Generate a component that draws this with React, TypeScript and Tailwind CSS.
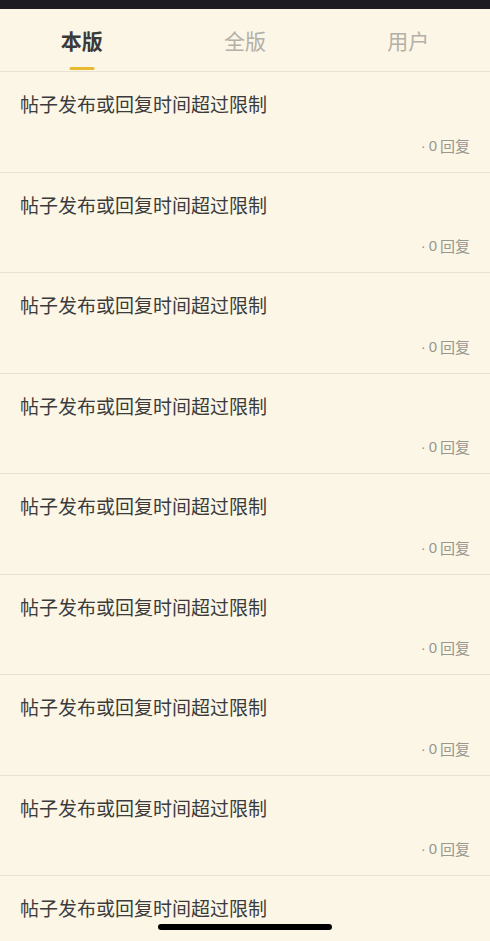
import React, { useState } from 'react';

const tabs = ['本版', '全版', '用户'];

const posts = Array.from({ length: 9 }, (_, i) => ({
  id: i,
  title: '帖子发布或回复时间超过限制',
  replies: 0,
}));

const App = () => {
  const [active, setActive] = useState(0);

  return (
    <div
      className="relative h-[941px] overflow-hidden bg-[#fcf6e6]"
      style={{ fontFamily: '"Noto Sans CJK SC", "Noto Sans", sans-serif' }}
    >
      {/* status bar strip */}
      <div className="h-[9px] bg-[#1c1c22]" />

      {/* Tabs */}
      <div className="grid h-[63px] grid-cols-3 border-b border-[#e9e2d0]">
        {tabs.map((tab, i) => (
          <button
            key={tab}
            onClick={() => setActive(i)}
            className="relative flex items-center justify-center"
          >
            <span
              className={`text-[21px] leading-none ${
                active === i ? 'font-bold text-[#3a3a3a]' : 'text-[#b3b0a8]'
              }`}
            >
              {tab}
            </span>
            {active === i && (
              <span className="absolute bottom-[1px] left-1/2 h-[3px] w-[25px] -translate-x-1/2 rounded-full bg-[#e9b92f]" />
            )}
          </button>
        ))}
      </div>

      {/* Post list */}
      <div>
        {posts.map((post) => (
          <div
            key={post.id}
            className="flex h-[100.5px] flex-col border-b border-[#e9e2d0] px-5 pt-[20px]"
          >
            <p className="text-[19px] leading-[24px] text-[#3b3b3b]">{post.title}</p>
            <p className="mt-auto mb-[17px] flex items-center justify-end gap-[3px] text-[15px] leading-[18px] text-[#9a9790]">
              <span className="font-['Liberation_Sans',sans-serif]">·</span>
              <span className="font-['Liberation_Sans',sans-serif]">{post.replies}</span>
              <span>回复</span>
            </p>
          </div>
        ))}
      </div>

      {/* home indicator */}
      <div className="absolute bottom-[11px] left-1/2 h-[6px] w-[174px] -translate-x-1/2 rounded-full bg-black" />
    </div>
  );
};

export default App;
